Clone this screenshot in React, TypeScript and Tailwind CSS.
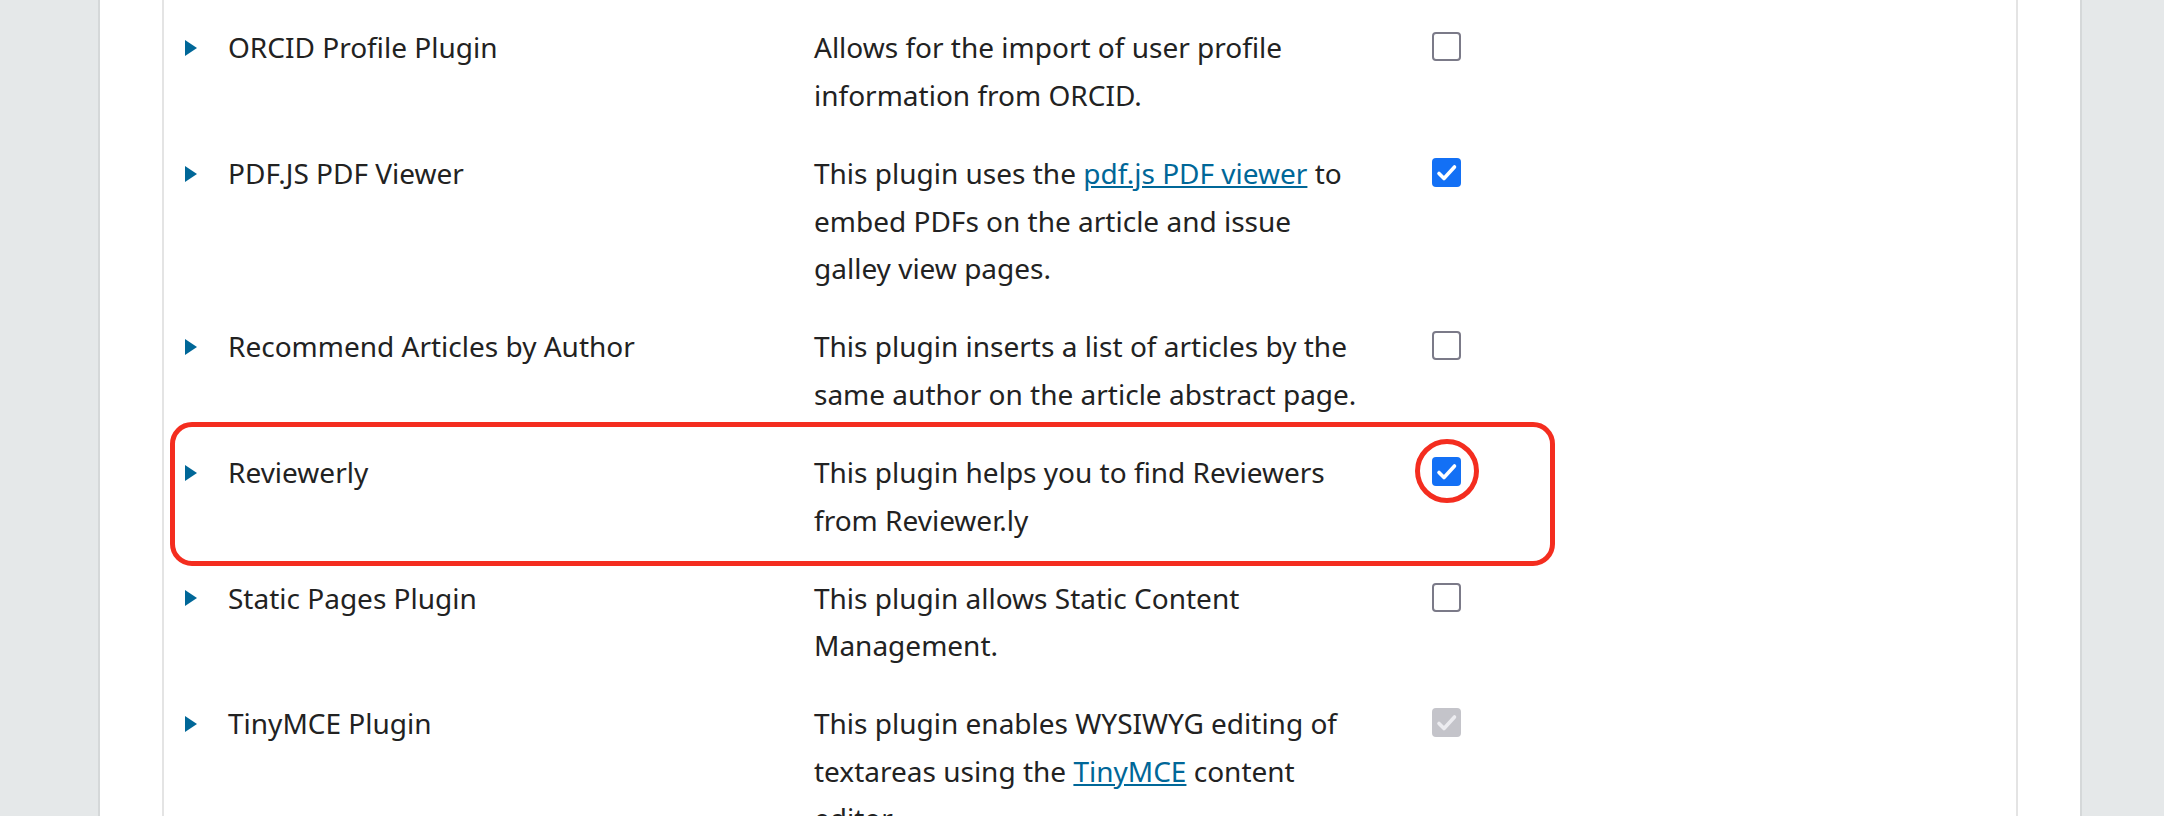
import type { ReactNode } from "react";

interface IPlugin {
  name: string;
  description: ReactNode;
  state: "off" | "on" | "locked";
  highlight?: boolean;
}

const linkClass = "text-[#006798] underline";

const plugins: IPlugin[] = [
  {
    name: "ORCID Profile Plugin",
    description: "Allows for the import of user profile information from ORCID.",
    state: "off",
  },
  {
    name: "PDF.JS PDF Viewer",
    description: (
      <>
        This plugin uses the <a className={linkClass}>pdf.js PDF viewer</a> to
        embed PDFs on the article and issue galley view pages.
      </>
    ),
    state: "on",
  },
  {
    name: "Recommend Articles by Author",
    description:
      "This plugin inserts a list of articles by the same author on the article abstract page.",
    state: "off",
  },
  {
    name: "Reviewerly",
    description: "This plugin helps you to find Reviewers from Reviewer.ly",
    state: "on",
    highlight: true,
  },
  {
    name: "Static Pages Plugin",
    description: "This plugin allows Static Content Management.",
    state: "off",
  },
  {
    name: "TinyMCE Plugin",
    description: (
      <>
        This plugin enables WYSIWYG editing of textareas using the{" "}
        <a className={linkClass}>TinyMCE</a> content editor.
      </>
    ),
    state: "locked",
  },
];

function Check({ color }: { color: string }) {
  return (
    <svg width="29" height="29" viewBox="0 0 29 29">
      <path
        d="M7 15.5 L12 20.5 L22.5 9"
        fill="none"
        stroke={color}
        strokeWidth="3.6"
        strokeLinecap="round"
        strokeLinejoin="round"
      />
    </svg>
  );
}

function Checkbox({ state }: { state: IPlugin["state"] }) {
  if (state === "on") {
    return (
      <div className="h-[29px] w-[29px] rounded-[4px] bg-[#1370f5]">
        <Check color="#ffffff" />
      </div>
    );
  }
  if (state === "locked") {
    return (
      <div className="h-[29px] w-[29px] rounded-[4px] bg-[#c4c4ca]">
        <Check color="#ececf0" />
      </div>
    );
  }
  return (
    <div className="h-[29px] w-[29px] rounded-[4px] border-[2.5px] border-[#7b7a88] bg-white" />
  );
}

function PluginRow({ plugin }: { plugin: IPlugin }) {
  return (
    <div className="relative flex py-[15.25px]">
      <div className="flex w-[650px] pl-[21px]">
        <span className="flex h-[47.6px] w-[43px] shrink-0 items-center">
          <svg width="12" height="16" viewBox="0 0 12 16">
            <path d="M0 0 L12 8 L0 16 Z" fill="#006798" />
          </svg>
        </span>
        <span>{plugin.name}</span>
      </div>
      <div className="w-[618px] pr-[66px]">{plugin.description}</div>
      <div className="relative pt-[8px]">
        <Checkbox state={plugin.state} />
        {plugin.highlight && (
          <div className="absolute left-[-17.5px] top-[-9.5px] h-[64px] w-[64px] rounded-full border-[5px] border-[#f42d1f]" />
        )}
      </div>
      {plugin.highlight && (
        <div className="pointer-events-none absolute left-[6px] top-[-12px] h-[144px] w-[1385px] rounded-[22px] border-[5px] border-[#f42d1f]" />
      )}
    </div>
  );
}

function App() {
  return (
    <div className="h-[816px] overflow-hidden bg-[#e5e8e9] font-['Noto_Sans',sans-serif] text-[28px] leading-[1.7] text-[#222]">
      <div className="ml-[98px] h-full w-[1984px] border-x-2 border-[#d5d8d9] bg-white px-[62px]">
        <div className="h-full border-x-2 border-[#e4e4e4] pt-[9px]">
          {plugins.map((plugin) => (
            <PluginRow key={plugin.name} plugin={plugin} />
          ))}
        </div>
      </div>
    </div>
  );
}

export default App;
